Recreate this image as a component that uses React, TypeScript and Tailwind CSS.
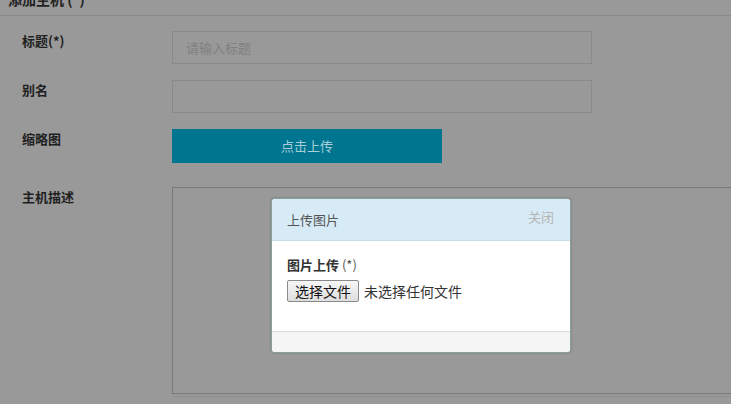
import React from "react";

const font = { fontFamily: '"Microsoft YaHei", "Noto Sans CJK SC", "Liberation Sans", sans-serif' };

export default function App() {
  return (
    <div className="relative w-[731px] h-[404px] overflow-hidden bg-[#999999]" style={font}>
      {/* top header, cut off */}
      <div className="h-[16px] overflow-hidden border-b border-[#8a8a8a]">
        <div className="pl-[8px] -mt-[11px] text-[14px] leading-[20px] font-bold text-[#222]">添加主机 (*)</div>
      </div>

      <div className="pt-[15px] flex flex-col">
        <div className="flex">
          <div className="w-[172px] pl-[22px] text-[13px] leading-[20px] font-bold text-[#1f1f1f]">标题(*)</div>
          <div className="w-[420px] h-[33px] border border-[#8a8a8a] flex items-center px-[13px] text-[13px] text-[#808080]">
            请输入标题
          </div>
        </div>
        <div className="flex mt-[16px]">
          <div className="w-[172px] pl-[22px] text-[13px] leading-[20px] font-bold text-[#1f1f1f]">别名</div>
          <div className="w-[420px] h-[33px] border border-[#8a8a8a]"></div>
        </div>
        <div className="flex mt-[16px]">
          <div className="w-[172px] pl-[22px] text-[13px] leading-[20px] font-bold text-[#1f1f1f]">缩略图</div>
          <div className="w-[270px] h-[34px] bg-[#007590] flex items-center justify-center text-[13px] text-[#a6cfd9]">
            点击上传
          </div>
        </div>
        <div className="flex mt-[24px]">
          <div className="w-[172px] pl-[22px] text-[13px] leading-[20px] font-bold text-[#1f1f1f]">主机描述</div>
          <div className="flex-1 h-[207px] border border-[#7a7a7a] border-r-0"></div>
        </div>
        <div className="ml-[172px] mt-[2px] border-t border-[#8e8e8e]"></div>
      </div>

      {/* modal */}
      <div className="absolute left-[271px] top-[198px] w-[300px] h-[155px] rounded-[4px] border border-[#86a09e] overflow-hidden flex flex-col bg-white shadow-[0_0_2px_rgba(0,0,0,0.3)]">
        <div className="h-[42px] shrink-0 bg-[#d6ebf5] border-b border-[#c4dde9] flex items-center justify-between pl-[15px] pr-[16px]">
          <span className="text-[13px] text-[#555]">上传图片</span>
          <span className="text-[13px] text-[#b5b5b5] -mt-[6px]">关闭</span>
        </div>
        <div className="flex-1 px-[15px] pt-[15px]">
          <div className="text-[13px] leading-[18px] text-[#333]">
            <span className="font-bold">图片上传</span> <span className="text-[#555]">(*)</span>
          </div>
          <div className="flex items-center mt-[6px]">
            <div className="h-[22px] px-[7px] flex items-center border border-[#8a8a8a] rounded-[2px] bg-gradient-to-b from-[#f6f6f6] to-[#dedede] text-[14px] text-[#111]">
              选择文件
            </div>
            <span className="ml-[5px] text-[14px] text-[#333]">未选择任何文件</span>
          </div>
        </div>
        <div className="h-[21px] shrink-0 bg-[#f5f5f5] border-t border-[#dcdcdc]"></div>
      </div>
    </div>
  );
}
